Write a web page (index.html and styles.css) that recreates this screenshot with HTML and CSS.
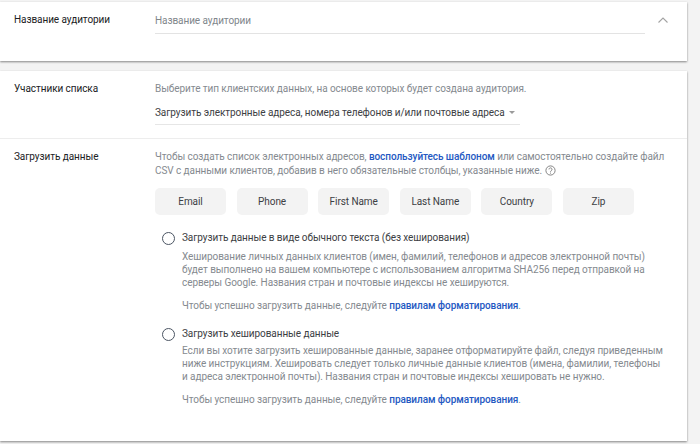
FILE: index.html
```html
<!DOCTYPE html>
<html lang="ru">
<head>
<meta charset="utf-8">
<title>Аудитория</title>
<link rel="stylesheet" href="styles.css">
</head>
<body>
<section class="card card-name">
  <h2 class="label">Название аудитории</h2>
  <div class="name-field"><span class="placeholder">Название аудитории</span></div>
  <svg class="chevron" width="12" height="8" viewBox="0 0 12 8"><path d="M1.5 6.5 6 2l4.5 4.5" fill="none" stroke="#a3a3a3" stroke-width="1.1"/></svg>
</section>
<section class="card card-main">
  <div class="row row-members">
    <h2 class="label">Участники списка</h2>
    <div class="content">
      <p class="text">Выберите тип клиентских данных, на основе которых будет создана аудитория.</p>
      <div class="select"><span>Загрузить электронные адреса, номера телефонов и/или почтовые адреса</span><i class="arrow"></i></div>
    </div>
  </div>
  <div class="row row-upload">
    <h2 class="label">Загрузить данные</h2>
    <div class="content">
      <p class="text intro">Чтобы создать список электронных адресов, <a href="#">воспользуйтесь шаблоном</a> или самостоятельно создайте файл<br>CSV с данными клиентов, добавив в него обязательные столбцы, указанные ниже. <svg class="help" width="11" height="11" viewBox="0 0 11 11"><circle cx="5.5" cy="5.5" r="4.6" fill="none" stroke="#777" stroke-width=".9"/><path d="M4 4.4a1.5 1.5 0 1 1 2.4 1.2c-.6.4-.9.7-.9 1.2M5.5 7.6v1" fill="none" stroke="#777" stroke-width=".9"/></svg></p>
      <div class="chips">
        <span class="chip">Email</span><span class="chip">Phone</span><span class="chip">First Name</span><span class="chip">Last Name</span><span class="chip">Country</span><span class="chip">Zip</span>
      </div>
      <div class="option option-plain">
        <span class="radio"></span>
        <div class="option-body">
          <div class="option-title">Загрузить данные в виде обычного текста (без хеширования)</div>
          <p class="text">Хеширование личных данных клиентов (имен, фамилий, телефонов и адресов электронной почты)<br>будет выполнено на вашем компьютере с использованием алгоритма SHA256 перед отправкой на<br>серверы Google. Названия стран и почтовые индексы не хешируются.</p>
          <p class="text note">Чтобы успешно загрузить данные, следуйте <a href="#">правилам форматирования</a>.</p>
        </div>
      </div>
      <div class="option option-hashed">
        <span class="radio"></span>
        <div class="option-body">
          <div class="option-title">Загрузить хешированные данные</div>
          <p class="text">Если вы хотите загрузить хешированные данные, заранее отформатируйте файл, следуя приведенным<br>ниже инструкциям. Хешировать следует только личные данные клиентов (имена, фамилии, телефоны<br>и адреса электронной почты). Названия стран и почтовые индексы хешировать не нужно.</p>
          <p class="text note">Чтобы успешно загрузить данные, следуйте <a href="#">правилам форматирования</a>.</p>
        </div>
      </div>
    </div>
  </div>
</section>
</body>
</html>
```
FILE: styles.css
```css
* { box-sizing: border-box; }
html, body { margin: 0; height: 100%; }
body {
  width: 700px;
  height: 444px;
  overflow: hidden;
  background: #f3f3f3;
  padding-top: 2px;
  font-family: Roboto, "Noto Sans", sans-serif;
  font-size: 10px;
  letter-spacing: -.07px;
  color: #3c4043;
  white-space: nowrap;
}
.card {
  width: 687px;
  background: #fff;
  box-shadow: 0 1px 2px rgba(0, 0, 0, .45);
}
.card-name {
  height: 59px;
  display: flex;
  align-items: flex-start;
  margin-bottom: 10px;
  padding: 11px 0 0 14px;
}
.card-main { height: 370px; }
.label {
  flex: 0 0 141px;
  margin: 0;
  font-size: 10px;
  font-weight: 400;
  line-height: 13px;
  color: #202124;
}
.name-field {
  width: 490px;
  height: 20px;
  margin-top: 1px;
  border-bottom: 1.5px solid #e3e3e3;
  font-size: 10px;
  line-height: 13px;
}
.placeholder { color: #80868b; }
.chevron { margin: 3px 0 0 12px; }
.row {
  display: flex;
  padding-left: 14px;
}
.row-members {
  height: 68px;
  padding-top: 11px;
  border-bottom: 1px solid #ededed;
}
.row-upload { padding-top: 11px; }
.content { flex: 0 0 512px; }
.text {
  margin: 0;
  font-size: 10px;
  line-height: 13px;
  color: #858a8f;
}
.text a {
  color: #2459c2;
  text-decoration: none;
  font-weight: 500;
}
.select {
  display: flex;
  align-items: center;
  width: 365px;
  height: 20px;
  margin-top: 10px;
  border-bottom: 1px solid #e6e6e6;
  line-height: 13px;
  color: #3c4043;
  padding-bottom: 4px;
}
.arrow {
  width: 0;
  height: 0;
  margin-left: 4px;
  border: 3.5px solid transparent;
  border-top-color: #9a9a9a;
  border-bottom: 0;
}
.intro { line-height: 14px; }
.help { vertical-align: -2px; margin-left: 1px; }
.chips {
  display: flex;
  gap: 10.6px;
  margin-top: 10px;
}
.chip {
  width: 71px;
  height: 27px;
  display: flex;
  align-items: center;
  justify-content: center;
  border-radius: 5px;
  background: #f3f3f3;
  color: #3c4043;
}
.option {
  display: flex;
  margin-top: 13px;
  padding-left: 7px;
}
.option-plain { margin-top: 14px; }
.radio {
  flex: 0 0 13px;
  height: 13px;
  margin-top: 3px;
  border: 1.3px solid #4b5563;
  border-radius: 50%;
}
.option-body { margin-left: 7px; }
.option-title {
  line-height: 13px;
  height: 21px;
  padding-top: 2px;
  color: #3c4043;
}
.option-hashed .option-title { height: 19px; }
.note { margin-top: 10px; }
```
